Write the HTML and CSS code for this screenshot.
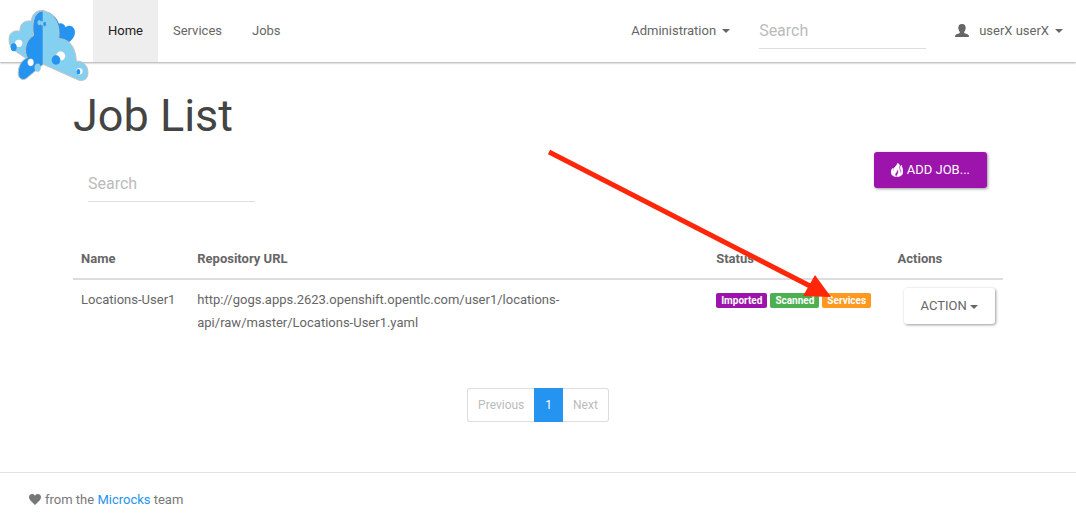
FILE: index.html
```html
<!DOCTYPE html>
<html lang="en">
<head>
<meta charset="utf-8">
<title>Job List</title>
<meta name="viewport" content="width=device-width, initial-scale=1">
<link rel="stylesheet" href="styles.css">
</head>
<body>
<header class="navbar">
  <a class="brand" href="#" aria-label="Microcks">
    <svg class="logo" viewBox="24 27 246 219" aria-hidden="true">
      <g stroke="#c3c3c3" stroke-width="3" stroke-linejoin="round">
        <path fill="#83d0f0" d="M100 190 L38 148 C28 138 26 122 28 110 C31 96 45 90 60 94 C58 76 70 60 94 63 C95 44 108 30 130 31 L132 130 Z"/>
        <path fill="#2593f0" stroke="none" d="M145 36 C160 44 172 56 177 71 C187 66 195 75 197 82 C203 74 220 75 224 90 C228 108 216 120 206 127 L165 125 Z"/>
        <path fill="#2593f0" d="M130 193 L78 236 C68 242 57 236 55 224 C53 204 62 181 82 173 C72 156 74 122 101 106 C95 80 98 34 130 32 Z"/>
        <path fill="#83d0f0" d="M130 32 C159 37 183 70 176 116 C202 116 227 134 229 184 C247 181 264 196 264 218 C264 238 249 245 235 240 L130 193 Z"/>
      </g>
      <path fill="#83d0f0" d="M129 33 L142 37 L142 170 L129 192 Z"/>
      <circle cx="56" cy="130" r="11" fill="#fff"/>
      <ellipse cx="41" cy="142" rx="9" ry="12" fill="#2593f0"/>
      <ellipse cx="118" cy="68" rx="5" ry="7" fill="#83d0f0" stroke="#c3c3c3"/>
      <ellipse cx="126" cy="70" rx="4" ry="7" fill="#83d0f0"/>
      <ellipse cx="134" cy="72" rx="4" ry="7" fill="#2593f0"/>
      <circle cx="182" cy="168" r="14" fill="#fff" stroke="#c3c3c3"/>
      <ellipse cx="168" cy="180" rx="13" ry="14" fill="#2593f0"/>
      <ellipse cx="92" cy="187" rx="9" ry="11" fill="#fff" stroke="#c3c3c3"/>
      <ellipse cx="113" cy="203" rx="9" ry="12" fill="#83d0f0" stroke="#c3c3c3"/>
      <circle cx="238" cy="214" r="10" fill="#fff" stroke="#c3c3c3"/>
      <ellipse cx="235" cy="215" rx="6" ry="8" fill="#2593f0"/>
    </svg>
  </a>
  <nav class="nav-main">
    <a class="nav-link active" href="#">Home</a>
    <a class="nav-link" href="#">Services</a>
    <a class="nav-link" href="#">Jobs</a>
  </nav>
  <div class="nav-tools">
    <button class="nav-menu" type="button">Administration <span class="caret"></span></button>
    <input class="search nav-search" type="search" placeholder="Search" aria-label="Search">
    <button class="nav-menu user" type="button">
      <svg class="user-icon" viewBox="0 0 14 14" aria-hidden="true"><path fill="currentColor" d="M7 0C9.600 0 10.700 1.500 10.600 3.700C10.900 4 10.800 5 10.300 5.400C10.100 6.600 9.700 7.200 9.200 7.800C9 8.200 9.100 8.900 9.600 9.200L12.500 10.300C13.600 10.800 14 11.500 14 13H0C0 11.500.4 10.800 1.500 10.300L4.400 9.200C4.900 8.900 5 8.200 4.800 7.800C4.300 7.200 3.900 6.600 3.700 5.400C3.200 5 3.100 4 3.400 3.700C3.300 1.500 4.400 0 7 0Z"/></svg>
      <span>userX userX</span> <span class="caret"></span>
    </button>
  </div>
</header>

<main class="container">
  <h1 class="title">Job List</h1>
  <div class="toolbar">
    <input class="search" type="search" placeholder="Search" aria-label="Search jobs">
    <button class="btn btn-primary" type="button">
      <svg class="fire-icon" viewBox="0 0 36 40" aria-hidden="true"><path fill="#fff" d="M20 0C20 7 7 12 7 22C7 25 8 27 9 28C6 25 5 20 6 15C2 18 0 22 0 27C0 34 6 39 16 40C11 36 11 32 14 29C18 25 19 20 17 15C23 20 24 28 20 33C17 36 17 39 18 40C30 39 36 33 36 25C36 17 32 13 31 6C27 10 27 16 30 20C32 24 31 28 28 30C29 20 21 16 25 9C26 5 24 2 20 0Z" stroke="#fff" stroke-width="2"/></svg>
      ADD JOB...
    </button>
  </div>

  <table class="jobs">
    <colgroup><col class="col-name"><col class="col-url"><col class="col-status"><col class="col-actions"></colgroup>
    <thead>
      <tr><th scope="col">Name</th><th scope="col">Repository URL</th><th scope="col">Status</th><th scope="col">Actions</th></tr>
    </thead>
    <tbody>
      <tr>
        <td>Locations-User1</td>
        <td><div class="url">http://gogs.apps.2623.openshift.opentlc.com/user1/locations-api/raw/master/Locations-User1.yaml</div></td>
        <td><div class="labels"><span class="label imported">Imported</span><span class="label scanned">Scanned</span><span class="label services">Services</span></div></td>
        <td><div class="actions"><button class="btn btn-default" type="button">ACTION <span class="caret"></span></button></div></td>
      </tr>
    </tbody>
  </table>

  <nav class="pagination" aria-label="Pages">
    <button class="page" type="button" disabled>Previous</button>
    <button class="page current" type="button" aria-current="page">1</button>
    <button class="page" type="button" disabled>Next</button>
  </nav>

  <svg class="arrow" viewBox="0 0 284 150" aria-hidden="true"><path stroke="#ff2609" stroke-width="5" d="M1 3L262 137"/><path fill="#ff2609" d="M267 126L283 148L255 147Z"/></svg>
</main>

<footer class="footer">
  <svg class="heart-icon" viewBox="0 0 12 11" aria-hidden="true"><path fill="currentColor" d="M6 11L1.200 6.200C-.3 4.700-.3 2.300.8 1.100C2.300-.5 4.900-.4 6 1.700C7.100-.4 9.700-.5 11.200 1.100C12.300 2.300 12.300 4.700 10.800 6.200Z"/></svg>
  <span>from the <a class="link" href="#">Microcks</a> team</span>
</footer>
</body>
</html>
```

FILE: styles.css
```css
* { box-sizing: border-box; }

body {
  margin: 0;
  background: #fff;
  color: #666;
  font: 13px/23px Roboto, "Liberation Sans", sans-serif;
}

button, input { font: inherit; color: inherit; margin: 0; }
button { border: 0; background: none; white-space: nowrap; }
a { text-decoration: none; color: inherit; }

.navbar {
  display: flex;
  height: 62px;
  box-shadow: 0 1px 2px rgba(0, 0, 0, .35);
}
.brand { width: 93px; padding: 9px 0 0 8px; }
.logo { display: block; width: 82px; height: 73px; }
.nav-main { display: flex; }
.nav-link { padding: 19px 15px; }
.nav-link.active { background: #eee; color: #212121; }
.nav-tools { display: flex; align-items: flex-start; padding-top: 12px; margin-left: auto; }
.nav-menu { display: flex; align-items: center; gap: 6px; padding: 7px 13px; }
.nav-search { margin: 0 16px; }
.user-icon { width: 14px; height: 14px; margin-right: 4px; }

.caret {
  display: inline-block;
  vertical-align: middle;
  border: 4px solid transparent;
  border-top-color: currentColor;
  border-bottom: 0;
}

.search {
  width: 167px;
  height: 37px;
  padding: 0;
  border: 0;
  border-bottom: 1px solid #ddd;
  border-radius: 0;
  outline: 0;
  appearance: none;
  background: none;
  font-size: 16px;
}
.search::placeholder { color: #bbb; opacity: 1; }

.container { position: relative; margin: 0 73px; padding-top: 29px; }
.title { margin: 0; color: #444; font-size: 45px; font-weight: 400; line-height: 49px; }
.toolbar {
  display: flex;
  justify-content: space-between;
  align-items: flex-start;
  padding: 12px 16px 0 15px;
}
.toolbar .search { margin-top: 13px; }

.btn {
  padding: 6px 17px;
  border-radius: 3px;
  box-shadow: 1px 1px 3px rgba(0, 0, 0, .4);
  line-height: 24px;
}
.btn-primary { display: flex; align-items: center; gap: 4px; background: #9c14ab; color: #fff; }
.fire-icon { width: 12px; height: 14px; }

.jobs { width: 100%; margin-top: 37px; table-layout: fixed; border-collapse: collapse; }
.col-name { width: 12.5%; }
.col-url { width: 55.8%; }
.col-status { width: 19.5%; }
.jobs th, .jobs td { padding: 8px; text-align: left; vertical-align: top; }
.jobs th { border-bottom: 2px solid #ddd; font-weight: 700; }
.url { max-width: 400px; }
.labels { display: flex; gap: 3px; padding-top: 5px; }
.label {
  padding: 0 5px;
  border-radius: 2px;
  color: #fff;
  font-size: 10px;
  font-weight: 700;
  line-height: 15px;
}
.imported { background: #9c14ab; }
.scanned { background: #4caf50; }
.services { background: #ff9821; }
.actions { padding-left: 6px; }

.pagination { display: flex; justify-content: center; margin-top: 46px; }
.page {
  height: 34px;
  padding: 0 10px;
  border: 1px solid #ddd;
  color: #bbb;
  font-size: 12px;
}
.page:first-child { border-right: 0; border-radius: 3px 0 0 3px; }
.page:last-child { border-left: 0; border-radius: 0 3px 3px 0; }
.page.current { border-color: #2593f0; background: #2593f0; color: #fff; }

.arrow { position: absolute; left: 475px; top: 87px; width: 284px; height: 150px; pointer-events: none; }

.footer {
  display: flex;
  align-items: center;
  gap: 4px;
  margin-top: 50px;
  padding: 15px 29px 11px;
  border-top: 1px solid #e3e3e3;
  color: #777;
}
.heart-icon { width: 12px; height: 11px; }
.link { color: #2593f0; }
```
